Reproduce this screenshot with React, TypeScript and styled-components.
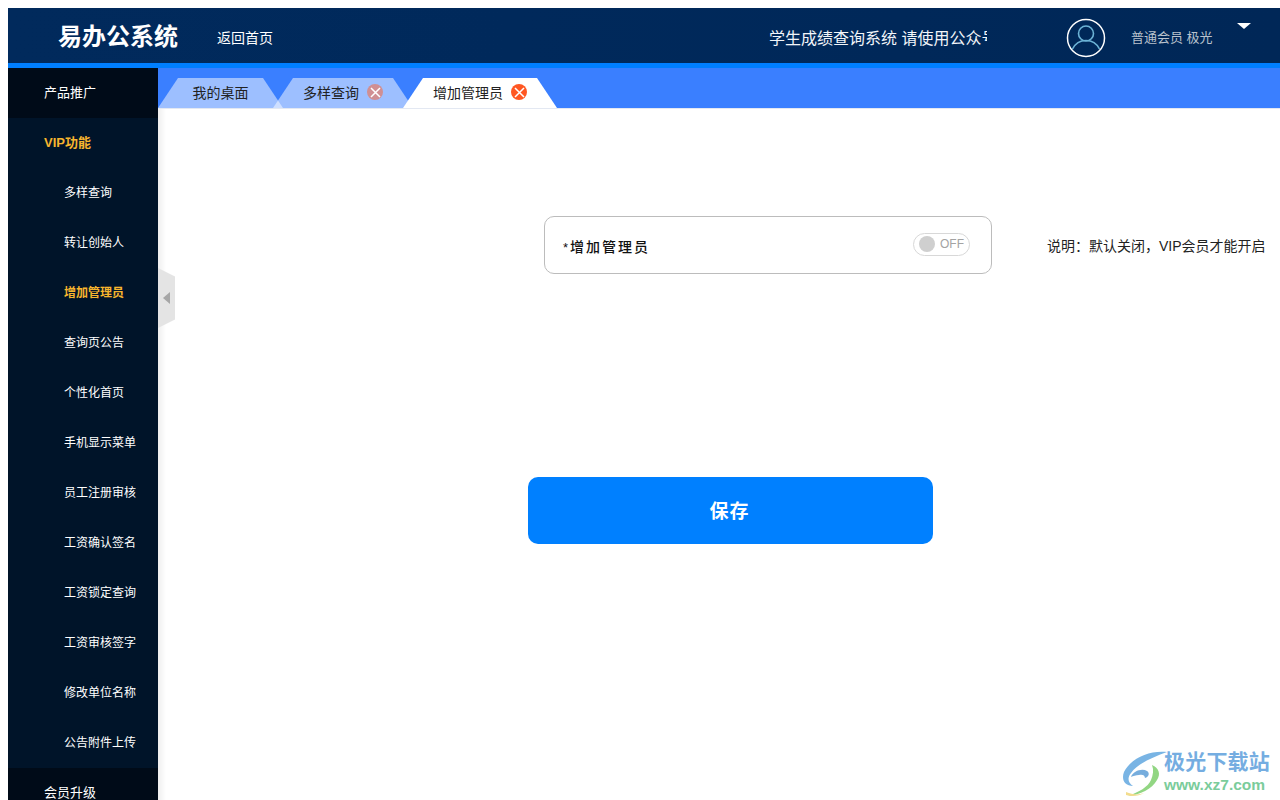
import styled, { createGlobalStyle } from "styled-components";

const GlobalStyle = createGlobalStyle`
  html, body {
    margin: 0;
    height: 800px;
    overflow: hidden;
    background: #fff;
  }
  body {
    padding: 8px 0 0 8px;
    box-sizing: border-box;
    font-family: "Liberation Sans", "Noto Sans CJK SC", sans-serif;
  }
`;

const Page = styled.div`
  width: 1272px;
  height: 792px;
  display: flex;
  flex-direction: column;
  overflow: hidden;
`;

const Header = styled.header`
  flex: none;
  height: 53px;
  padding-top: 2px;
  border-bottom: 5px solid #007fff;
  background: linear-gradient(90deg, #012a5c 0%, #00295b 40%, #002757 100%);
  display: flex;
  align-items: center;
  color: #fff;
`;

const Brand = styled.div`
  width: 209px;
  padding-left: 50px;
  box-sizing: border-box;
  font-size: 24px;
  font-weight: 700;
  line-height: 58px;
`;

const HomeLink = styled.a`
  font-size: 14px;
  width: 552px;
  color: #fff;
`;

const Marquee = styled.div`
  width: 218px;
  overflow: hidden;
  white-space: nowrap;
  font-size: 16px;
  color: #f2f5f9;
`;

const Avatar = styled.svg`
  width: 40px;
  height: 40px;
  margin-left: 79px;
  margin-top: 3px;
  flex: none;
`;

const UserName = styled.div`
  margin-left: 25px;
  width: 106px;
  font-size: 13px;
  color: #b9c2cd;
`;

const Caret = styled.div`
  width: 0;
  height: 0;
  margin-bottom: 21px;
  border-left: 7px solid transparent;
  border-right: 7px solid transparent;
  border-top: 6px solid #fff;
`;

const Body = styled.div`
  flex: 1;
  display: flex;
  min-height: 0;
`;

const Sidebar = styled.nav`
  flex: none;
  width: 150px;
  background: #001429;
  overflow: hidden;
  position: relative;
  z-index: 2;
`;

const MenuItem = styled.div<{ $sub?: boolean; $dark?: boolean; $active?: boolean }>`
  height: 50px;
  line-height: ${(p) => (p.$sub ? 50 : 49)}px;
  padding-left: ${(p) => (p.$sub ? 56 : 36)}px;
  font-size: ${(p) => (p.$sub ? 12 : 13)}px;
  white-space: nowrap;
  color: ${(p) => (p.$active ? "#f7b52e" : "#fff")};
  font-weight: ${(p) => (p.$active ? 600 : 400)};
  background: ${(p) => (p.$dark ? "#000b18" : "transparent")};
`;

const Main = styled.main`
  flex: 1;
  min-width: 0;
  position: relative;
  background: linear-gradient(90deg, #efefef 0, #fff 8px);
`;

const TabBar = styled.div`
  height: 40px;
  box-sizing: border-box;
  padding-top: 10px;
  background: #3a7fff;
  display: flex;
  box-shadow: 0 1px 0 #e3e8f2;
`;

const Tab = styled.div<{ $width: number; $active?: boolean; $overlap?: number }>`
  width: ${(p) => p.$width}px;
  margin-left: ${(p) => -(p.$overlap ?? 0)}px;
  flex: none;
  display: flex;
  align-items: center;
  justify-content: center;
  gap: 8px;
  height: 30px;
  box-sizing: border-box;
  padding-bottom: 2px;
  font-size: 14px;
  color: #222;
  background: ${(p) => (p.$active ? "#fff" : "rgba(255, 255, 255, 0.5)")};
  clip-path: polygon(0 100%, 20px 0, calc(100% - 20px) 0, 100% 100%);
`;

const Close = styled.span<{ $active?: boolean }>`
  width: 16px;
  height: 16px;
  border-radius: 50%;
  background: ${(p) => (p.$active ? "#ff5722" : "#d08f93")};
  display: inline-flex;
  align-items: center;
  justify-content: center;
  flex: none;

  svg {
    display: block;
  }
`;

const Handle = styled.div`
  position: absolute;
  left: 0;
  top: 200px;
  width: 17px;
  height: 60px;
  background: #e4e4e4;
  clip-path: polygon(0 0, 100% 14%, 100% 86%, 0 100%);
  display: flex;
  align-items: center;
  padding-left: 5px;
  box-sizing: border-box;
`;

const HandleArrow = styled.div`
  width: 0;
  height: 0;
  border-top: 6px solid transparent;
  border-bottom: 6px solid transparent;
  border-right: 7px solid #a6a6a6;
`;

const Content = styled.div`
  padding: 108px 0 0 370px;
`;

const FieldRow = styled.div`
  display: flex;
  align-items: center;
  padding-left: 16px;
`;

const FieldCard = styled.div`
  width: 448px;
  height: 58px;
  box-sizing: border-box;
  border: 1px solid #bcbcbc;
  border-radius: 10px;
  padding: 0 21px 0 18px;
  display: flex;
  align-items: center;
  justify-content: space-between;
`;

const FieldLabel = styled.div`
  font-size: 14px;
  font-weight: 500;
  letter-spacing: 2px;
  color: #111;
  padding-top: 1px;

  i {
    font-style: normal;
    font-size: 13px;
    font-weight: 400;
    letter-spacing: 2px;
  }
`;

const Toggle = styled.div`
  width: 57px;
  height: 23px;
  box-sizing: border-box;
  border: 1px solid #d8d8d8;
  border-radius: 12px;
  display: flex;
  align-items: center;
  padding-left: 5px;
  gap: 5px;
  margin-bottom: 2px;
  font-size: 12px;
  color: #a3a3a3;
`;

const Knob = styled.span`
  width: 16px;
  height: 16px;
  border-radius: 50%;
  background: #cfcfcf;
`;

const Hint = styled.div`
  margin-left: 55px;
  font-size: 14px;
  color: #222;
  white-space: nowrap;
  margin-bottom: 1px;
`;

const SaveButton = styled.button`
  display: block;
  margin-top: 203px;
  width: 405px;
  height: 67px;
  border: none;
  border-radius: 10px;
  padding: 0 2px 3px 0;
  background: #0080ff;
  color: #fff;
  font-family: inherit;
  font-size: 19px;
  font-weight: 700;
  letter-spacing: 1px;
`;

const Watermark = styled.div`
  position: absolute;
  right: 10px;
  bottom: 2px;
  display: flex;
  align-items: flex-end;
  opacity: 0.85;
`;

const WatermarkText = styled.div`
  display: flex;
  flex-direction: column;
  margin: 0 0 4px -4px;
`;

const WatermarkName = styled.div`
  font-size: 21px;
  font-weight: 700;
  line-height: 28px;
  letter-spacing: 0.2px;
  color: #5d9fdc;
`;

const WatermarkUrl = styled.div`
  font-size: 15.5px;
  line-height: 18px;
  font-weight: 700;
  color: #64c48a;
`;

const menu = [
  { label: "VIP功能", active: true },
  { label: "多样查询", sub: true },
  { label: "转让创始人", sub: true },
  { label: "增加管理员", sub: true, active: true },
  { label: "查询页公告", sub: true },
  { label: "个性化首页", sub: true },
  { label: "手机显示菜单", sub: true },
  { label: "员工注册审核", sub: true },
  { label: "工资确认签名", sub: true },
  { label: "工资锁定查询", sub: true },
  { label: "工资审核签字", sub: true },
  { label: "修改单位名称", sub: true },
  { label: "公告附件上传", sub: true },
];

function CloseIcon() {
  return (
    <svg width="11" height="11" viewBox="0 0 11 11">
      <path d="M1 1l9 9M10 1l-9 9" stroke="#fff" strokeWidth="1.5" />
    </svg>
  );
}

function App() {
  return (
    <>
      <GlobalStyle />
      <Page>
        <Header>
          <Brand>易办公系统</Brand>
          <HomeLink>返回首页</HomeLink>
          <Marquee>学生成绩查询系统 请使用公众号查询</Marquee>
          <Avatar viewBox="0 0 40 40">
            <circle cx="20" cy="20" r="18.5" fill="none" stroke="#fff" strokeWidth="1.5" />
            <circle cx="20" cy="15.5" r="7.5" fill="none" stroke="#6cb3d6" strokeWidth="1.6" />
            <path d="M6.5 31c3-6 8-8.5 13.500-8.500S30.500 25 33.500 31" fill="none" stroke="#6cb3d6" strokeWidth="1.6" />
          </Avatar>
          <UserName>普通会员 极光</UserName>
          <Caret />
        </Header>
        <Body>
          <Sidebar>
            <MenuItem $dark>产品推广</MenuItem>
            {menu.map((m) => (
              <MenuItem key={m.label} $sub={m.sub} $active={m.active}>
                {m.label}
              </MenuItem>
            ))}
            <MenuItem $dark>会员升级</MenuItem>
          </Sidebar>
          <Main>
            <TabBar>
              <Tab $width={125}>我的桌面</Tab>
              <Tab $width={140} $overlap={10}>
                多样查询
                <Close><CloseIcon /></Close>
              </Tab>
              <Tab $width={154} $overlap={10} $active>
                增加管理员
                <Close $active><CloseIcon /></Close>
              </Tab>
            </TabBar>
            <Handle>
              <HandleArrow />
            </Handle>
            <Content>
              <FieldRow>
                <FieldCard>
                  <FieldLabel><i>*</i>增加管理员</FieldLabel>
                  <Toggle>
                    <Knob />
                    OFF
                  </Toggle>
                </FieldCard>
                <Hint>说明：默认关闭，VIP会员才能开启</Hint>
              </FieldRow>
              <SaveButton>保存</SaveButton>
            </Content>
            <Watermark>
              <svg width="46" height="48" viewBox="0 0 46 48">
                <path d="M45 2C28 0 9 8 2 22c-3 8 1 14 9 14-5-3-6-8-2-13C15 14 31 7 45 2z" fill="#62a8e0" />
                <path d="M9 27c2-6 11-9 16-6 3 2 2 6-2 7 0-3-3-4-6-3-3 0-6 1-8 2z" fill="#5f9fd8" />
                <path d="M30 15c7 3 9 9 5 15-5 9-17 15-29 16 11-4 20-9 23-16 2-5 3-10 1-15z" fill="#7fcf6e" />
                <path d="M4 42c7 3 13 3 18 1-5 3-12 4-18 2z" fill="#f1d77a" />
              </svg>
              <WatermarkText>
                <WatermarkName>极光下载站</WatermarkName>
                <WatermarkUrl>www.xz7.com</WatermarkUrl>
              </WatermarkText>
            </Watermark>
          </Main>
        </Body>
      </Page>
    </>
  );
}

export default App;
